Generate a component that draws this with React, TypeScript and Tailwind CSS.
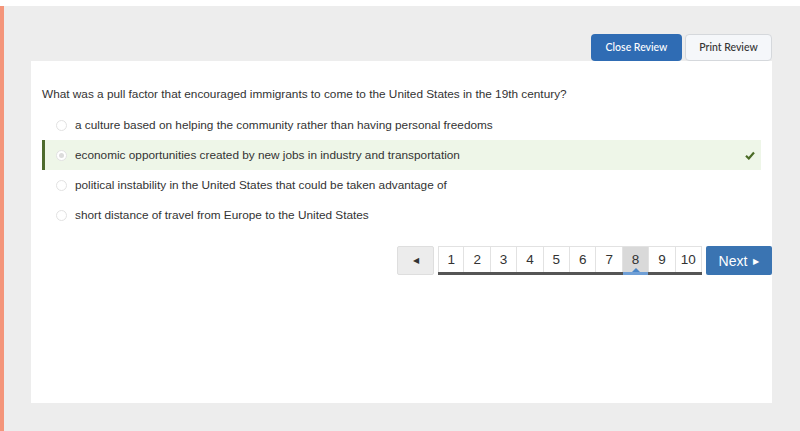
const OPTIONS = [
  { text: 'a culture based on helping the community rather than having personal freedoms', correct: false },
  { text: 'economic opportunities created by new jobs in industry and transportation', correct: true },
  { text: 'political instability in the United States that could be taken advantage of', correct: false },
  { text: 'short distance of travel from Europe to the United States', correct: false },
]

const PAGES = [1, 2, 3, 4, 5, 6, 7, 8, 9, 10]
const CURRENT = 8

function Radio({ dim }: { dim?: boolean }) {
  return (
    <span className="grid size-[11px] shrink-0 place-items-center rounded-full border border-[#e2e2e2] bg-white">
      {dim && <span className="size-[5px] rounded-full bg-[#dcdcdc]" />}
    </span>
  )
}

function Pagination() {
  return (
    <div className="flex items-start justify-end gap-[4px]">
      <button
        type="button"
        className="grid h-[29px] w-[37px] place-items-center rounded-[2px] border border-[#dedede] bg-[#ececec] text-[8px] text-[#333]"
      >
        ◀
      </button>
      <div className="flex border-b-[3px] border-[#555]">
        {PAGES.map((p) => (
          <span
            key={p}
            className={
              p === CURRENT
                ? 'relative grid h-[26px] w-[26.4px] place-items-center border-t border-r border-[#e2e2e2] bg-[#d9d9d9] pt-[2px] text-[13.5px] text-[#333]'
                : 'relative grid h-[26px] w-[26.4px] place-items-center border-t border-r border-[#e2e2e2] bg-white pt-[2px] text-[13.5px] text-[#333] first:border-l'
            }
          >
            {p}
            {p === CURRENT && (
              <>
                <span className="absolute bottom-0 left-1/2 h-0 w-0 -translate-x-1/2 border-x-[4px] border-b-[4px] border-x-transparent border-b-[#4a86c8]" />
                <span className="absolute -bottom-[3px] left-0 h-[3px] w-full bg-[#6f9fd6]" />
              </>
            )}
          </span>
        ))}
      </div>
      <button
        type="button"
        className="flex h-[29px] w-[66px] items-center justify-center gap-[6px] rounded-[2px] bg-[#3a74b2] pt-[2px] text-[14px] text-white"
      >
        Next <span className="text-[8px]">▶</span>
      </button>
    </div>
  )
}

export default function App() {
  return (
    <div className="flex h-[431px] w-[800px] flex-col bg-white font-['Liberation_Sans',Arial,sans-serif]">
      <div className="h-[6px] shrink-0 bg-white" />
      <div className="flex min-h-0 flex-1">
        <div className="w-[4px] shrink-0 bg-[#f4957a]" />
        <div className="flex flex-1 flex-col bg-[#ededed] pl-[27px] pr-[28px] pt-[28px]">
          <div className="flex justify-end gap-[3px] font-['Lato',sans-serif] text-[10.5px] font-medium">
            <button
              type="button"
              className="h-[27px] w-[91px] rounded-[4px] bg-[#2f6cb4] text-white"
            >
              Close Review
            </button>
            <button
              type="button"
              className="h-[27px] w-[87px] rounded-[4px] border border-[#d5d8dc] bg-[#f5f7fa] text-[#333]"
            >
              Print Review
            </button>
          </div>
          <div className="h-[342px] bg-white pt-[24px] text-[11.8px] text-[#333]">
            <p className="pl-[11px] leading-[18px]">
              What was a pull factor that encouraged immigrants to come to the United States in the 19th century?
            </p>
            <div className="mx-[11px] mt-[7px]">
              {OPTIONS.map((o) => (
                <div
                  key={o.text}
                  className={
                    o.correct
                      ? 'flex h-[30px] items-center gap-[8px] border-l-[3px] border-[#4e6b2e] bg-[#eef6e8] pl-[11px] pr-[6px]'
                      : 'flex h-[30px] items-center gap-[8px] pl-[14px] pr-[6px]'
                  }
                >
                  <Radio dim={o.correct} />
                  <span className="flex-1 pt-px">{o.text}</span>
                  {o.correct && (
                    <svg width="10" height="9" viewBox="0 0 10 9" className="shrink-0">
                      <path d="M1 4.8 L3.8 7.5 L9 1.5" fill="none" stroke="#4a6b26" strokeWidth="2.2" />
                    </svg>
                  )}
                </div>
              ))}
            </div>
            <div className="mt-[16px]">
              <Pagination />
            </div>
          </div>
        </div>
      </div>
    </div>
  )
}
